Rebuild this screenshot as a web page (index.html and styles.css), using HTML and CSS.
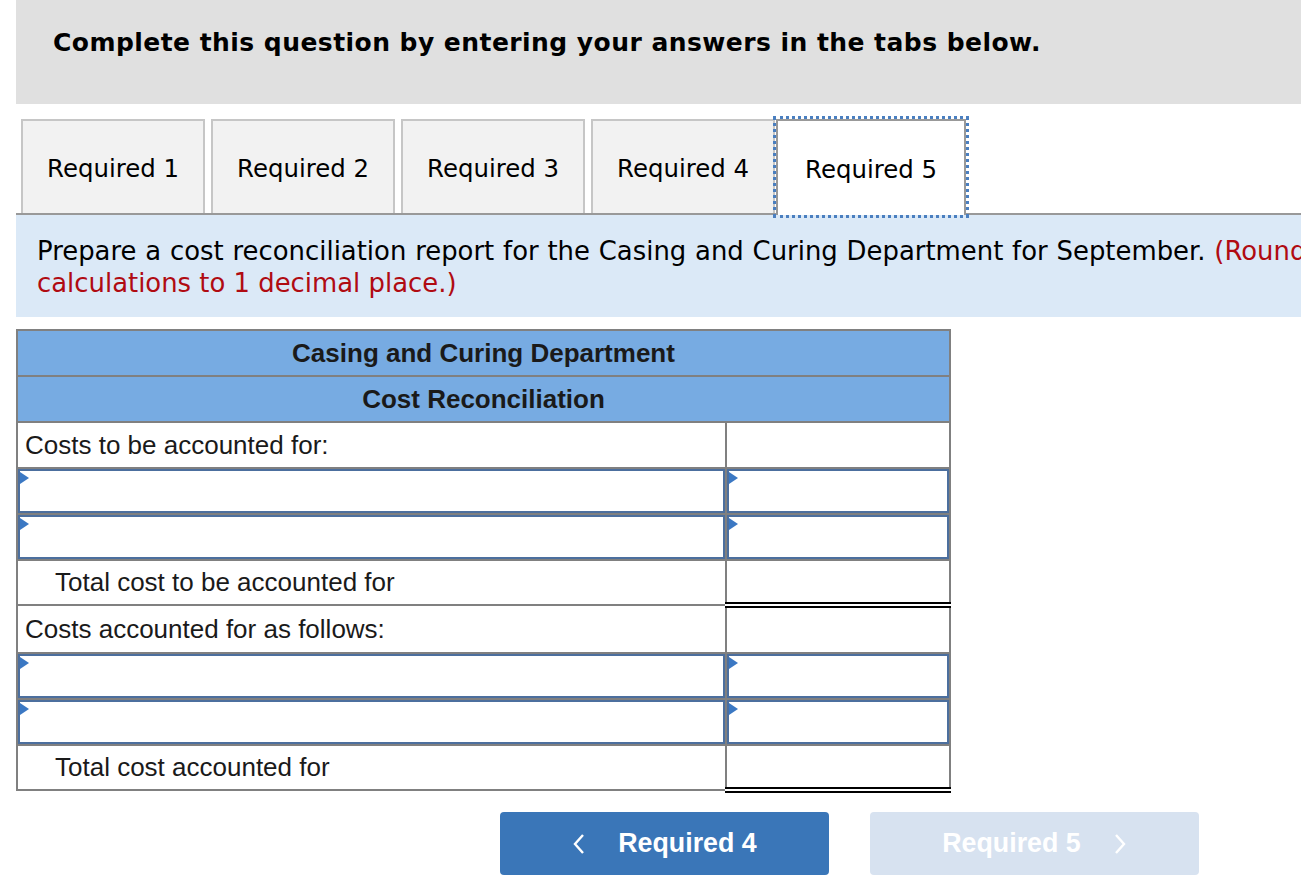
FILE: index.html
```html
<!DOCTYPE html>
<html>
<head>
<meta charset="utf-8">
<link rel="stylesheet" href="styles.css">
</head>
<body>
<div class="page">
  <div class="banner">
    <h1 class="banner-title">Complete this question by entering your answers in the tabs below.</h1>
  </div>

  <div class="tabs">
    <div class="tab">Required 1</div>
    <div class="tab">Required 2</div>
    <div class="tab">Required 3</div>
    <div class="tab">Required 4</div>
    <div class="tab tab-active">Required 5</div>
  </div>

  <div class="instructions">
    <p class="line1">Prepare a cost reconciliation report for the Casing and Curing Department for September. <span class="note">(Round</span></p>
    <p><span class="note">calculations to 1 decimal place.)</span></p>
  </div>

  <table class="report">
    <tr><th colspan="2" class="head">Casing and Curing Department</th></tr>
    <tr><th colspan="2" class="head">Cost Reconciliation</th></tr>
    <tr>
      <td class="label">Costs to be accounted for:</td>
      <td class="amount"></td>
    </tr>
    <tr class="input-row">
      <td class="in-cell"><div class="field"><span class="flag"></span></div></td>
      <td class="in-cell amt"><div class="field"><span class="flag"></span></div></td>
    </tr>
    <tr class="input-row">
      <td class="in-cell"><div class="field"><span class="flag"></span></div></td>
      <td class="in-cell amt"><div class="field"><span class="flag"></span></div></td>
    </tr>
    <tr class="total-row">
      <td class="label indent">Total cost to be accounted for</td>
      <td class="amount total"></td>
    </tr>
    <tr>
      <td class="label">Costs accounted for as follows:</td>
      <td class="amount"></td>
    </tr>
    <tr class="input-row">
      <td class="in-cell"><div class="field"><span class="flag"></span></div></td>
      <td class="in-cell amt"><div class="field"><span class="flag"></span></div></td>
    </tr>
    <tr class="input-row">
      <td class="in-cell"><div class="field"><span class="flag"></span></div></td>
      <td class="in-cell amt"><div class="field"><span class="flag"></span></div></td>
    </tr>
    <tr class="total-row">
      <td class="label indent">Total cost accounted for</td>
      <td class="amount total"></td>
    </tr>
  </table>

  <div class="nav">
    <div class="btn btn-prev">
      <svg class="chev" width="14" height="24" viewBox="0 0 14 24"><path d="M11 3 L3 12 L11 21" fill="none" stroke="#fff" stroke-width="2.4"/></svg>
      <span>Required 4</span>
    </div>
    <div class="btn btn-next">
      <span>Required 5</span>
      <svg class="chev" width="14" height="24" viewBox="0 0 14 24"><path d="M3 3 L11 12 L3 21" fill="none" stroke="#fff" stroke-width="2.4"/></svg>
    </div>
  </div>
</div>
</body>
</html>
```

FILE: styles.css
```css
html, body {
  margin: 0;
  padding: 0;
  overflow: hidden;
  background: #fff;
}
.page {
  width: 1285px;
  padding-left: 16px;
}
.banner {
  background: #e0e0e0;
  height: 104px;
  padding-left: 37px;
  display: flex;
  align-items: flex-start;
}
.banner-title {
  margin: 26px 0 0 0;
  font-family: "DejaVu Sans", Verdana, sans-serif;
  font-weight: bold;
  font-size: 25px;
  letter-spacing: 0.45px;
  line-height: 34px;
  color: #000;
  white-space: nowrap;
}
.tabs {
  display: flex;
  gap: 6px;
  margin-top: 15px;
  padding-left: 5px;
  border-bottom: 2px solid #999;
  height: 96px;
  box-sizing: border-box;
}
.tab {
  width: 184px;
  box-sizing: border-box;
  height: 94px;
  border: 2px solid #c6c6c6;
  border-bottom: none;
  background: #f2f2f2;
  font-family: "DejaVu Sans", Verdana, sans-serif;
  font-size: 24.4px;
  color: #000;
  display: flex;
  align-items: center;
  justify-content: center;
  padding-top: 2px;
}
.tab-active {
  margin-left: -5px;
  width: 190px;
  height: 96px;
  background: #fff;
  border: 2px solid #999;
  border-bottom: none;
  outline: 3px dotted #4a7fc0;
  outline-offset: 0;
  margin-bottom: -2px;
  padding-top: 2px;
  padding-bottom: 0;
}
.instructions {
  background: #dbe9f7;
  padding: 20px 0 18px 21px;
  font-family: "DejaVu Sans", Verdana, sans-serif;
  font-size: 25.9px;
  line-height: 32px;
  color: #000;
  white-space: nowrap;
  overflow: hidden;
}
.instructions p { margin: 0; }
.line1 { word-spacing: 0.6px; }
.note { color: #b00b12; }
.report {
  margin-top: 12px;
  border-collapse: collapse;
  width: 935px;
  font-family: "Liberation Sans", Arial, sans-serif;
  font-size: 26px;
  color: #1a1a1a;
  border: 2px solid #808080;
}
.report th.head {
  background: #77abe2;
  height: 44px;
  padding: 0;
  font-weight: bold;
  font-size: 26px;
  border: 2px solid #808080;
  text-align: center;
  color: #1a1a1a;
}
.report td {
  border: 2px solid #808080;
  height: 44px;
  padding: 0;
}
.report td.label {
  width: 692px;
  padding-left: 7px;
}
.report td.indent {
  width: 662px;
  padding-left: 37px;
}
.report tr.total-row td { height: 41px; }
.amount { width: 220px; }
.amount.total {
  border-bottom: 6px double #000 !important;
  border-top: 2px solid #000 !important;
}
.in-cell {
  padding: 0 !important;
  vertical-align: top;
}
.field {
  position: relative;
  height: 44px;
  border: 2px solid #4c6f9e;
  box-sizing: border-box;
  background: #fff;
  margin: 0;
}
.flag {
  position: absolute;
  left: 0;
  top: 1px;
  width: 0;
  height: 0;
  border-top: 6px solid transparent;
  border-bottom: 6px solid transparent;
  border-left: 9px solid #3b78c3;
}
.nav {
  display: flex;
  gap: 41px;
  margin-top: 19px;
  padding-left: 484px;
}
.btn {
  width: 329px;
  height: 63px;
  border-radius: 4px;
  display: flex;
  align-items: center;
  justify-content: center;
  gap: 32px;
  font-family: "Liberation Sans", Arial, sans-serif;
  font-weight: bold;
  font-size: 26.8px;
  color: #fff;
}
.btn-prev { background: #3a76b8; }
.btn-next { background: #d7e2f0; }
.chev { display: block; }
```
